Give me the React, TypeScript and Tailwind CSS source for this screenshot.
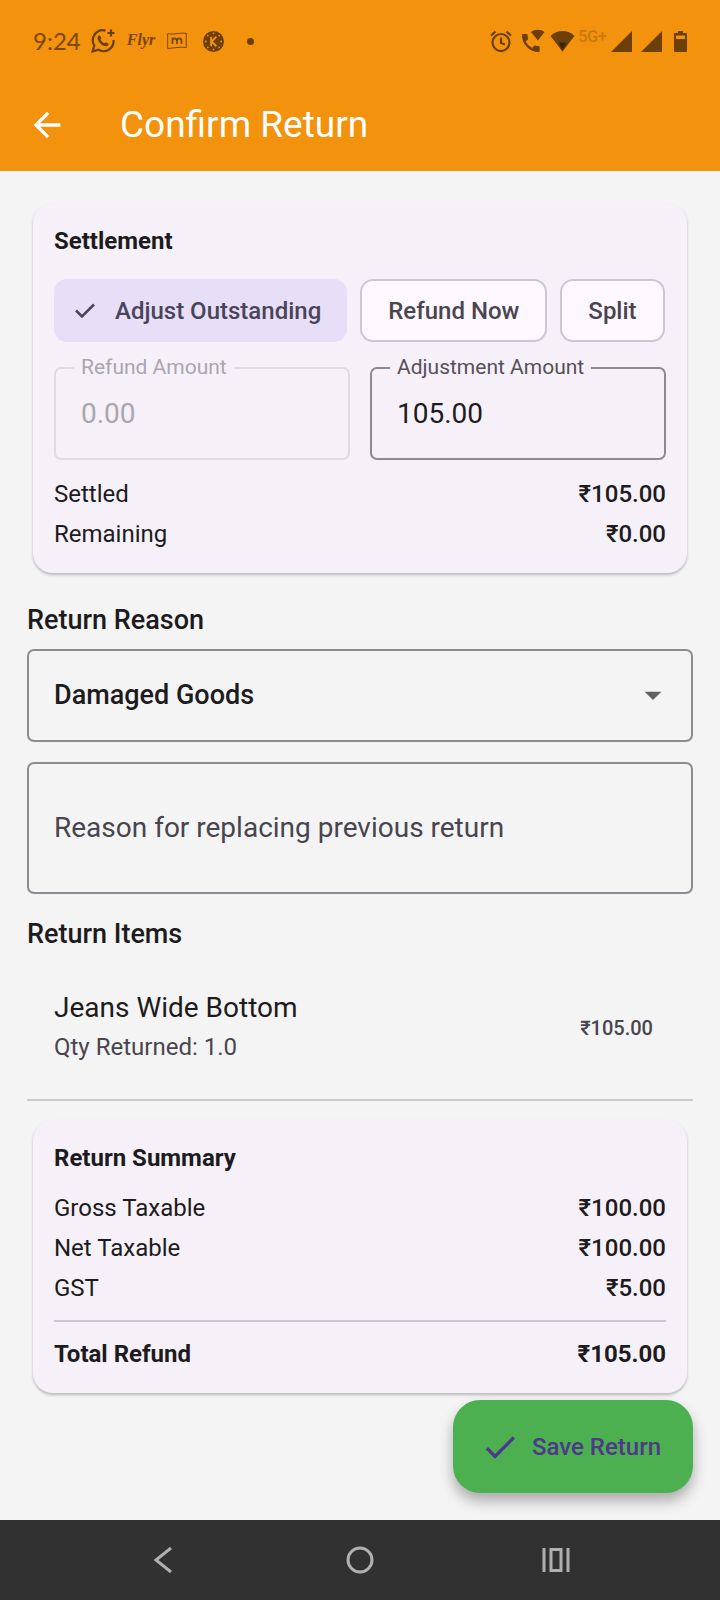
import { useState } from "react";
import type { ReactNode } from "react";

type Settlement = "adjust" | "refund" | "split";

const options: { id: Settlement; label: string }[] = [
  { id: "adjust", label: "Adjust Outstanding" },
  { id: "refund", label: "Refund Now" },
  { id: "split", label: "Split" },
];

const StatusBar = () => (
  <div className="flex justify-between px-[33px] pt-[27px] pb-[23px] text-[#6b3f05]">
    <div className="flex h-7 items-center">
      <span className="font-['Lato',sans-serif] text-2xl leading-7 text-[#7a4606]">9:24</span>
      <svg className="ml-[10px] h-6 w-6" viewBox="0 0 24 24" fill="none" stroke="currentColor" strokeWidth="2.200">
        <path d="M14.5 1.6A10 10 0 0 0 3.3 16.4L1.6 22.4l6-1.6A10 10 0 0 0 22.500 11" />
        <path d="M20 0.5v7M16.500 4h7" />
        <path
          fill="currentColor"
          stroke="none"
          d="M8 6.600c.7-.2 1.200 0 1.500.6l.7 1.800c.2.6-.1 1.100-.8 1.800.9 1.500 2.200 2.700 3.900 3.600.7-.8 1.200-1.200 1.900-.9l1.700.8c.6.3.8.8.5 1.400-.6 1.300-2 1.800-3.500 1.400-3.500-1-6.200-3.500-7.200-6.900-.4-1.500 0-2.900 1.300-3.600z"
        />
      </svg>
      <span className="ml-3 mb-[2px] font-['Liberation_Serif',serif] text-base font-bold italic leading-6 text-[#7a4606]">
        Flyr
      </span>
      <svg className="ml-3 h-5 w-5 text-[#7a4606]" viewBox="0 0 20 20" fill="none" stroke="currentColor">
        <path d="M.7 2.700q5 .8 9.300 0t9.300-.5v14.300q-5-.6-9.300 0t-9.300 1z" strokeWidth="1" />
        <path d="M5.500 13V6.500M5.500 9q0-1.500 2-1.500t2.500 1.500v4M10 9q.2-1.500 2.200-1.500t2.300 1.500v4" strokeWidth="1.800" />
      </svg>
      <svg className="ml-4 h-[21px] w-[21px]" viewBox="0 0 22 22">
        <circle cx="11" cy="11" r="11" fill="currentColor" />
        <path d="M8.500 6v10M14 6l-5 5 5 5" fill="none" stroke="#f3920d" strokeWidth="2" />
        <g fill="#f3920d">
          <circle cx="11" cy="2.600" r=".9" />
          <circle cx="5" cy="4.800" r=".9" />
          <circle cx="17" cy="4.800" r=".9" />
          <circle cx="3" cy="11" r="1" />
          <circle cx="19" cy="11" r="1" />
          <circle cx="5" cy="17.200" r=".9" />
          <circle cx="17" cy="17.200" r=".9" />
          <circle cx="11" cy="19.400" r=".9" />
        </g>
      </svg>
      <span className="ml-[23px] h-[7px] w-[7px] rounded-full bg-[#6b3f05]" />
    </div>

    <div className="flex h-7 items-center">
      <svg className="h-[22px] w-[22px]" viewBox="0 0 22 22" fill="none" stroke="currentColor" strokeWidth="2.200">
        <circle cx="11" cy="12.500" r="8.500" />
        <path d="M11 7.500v5.500l4 1.500M1 5.500l4.500-4M21 5.500l-4.500-4" />
      </svg>
      <svg className="ml-[9px] h-6 w-6" viewBox="0 0 24 24" fill="currentColor">
        <path d="M2 5h3.500c.5 0 1 .4 1 1 0 1.200.2 2.300.6 3.400.1.400 0 .8-.3 1L4.700 12.600c1.400 2.700 3.700 4.900 6.400 6.300l2.100-2.100c.3-.3.700-.4 1-.2 1.100.4 2.300.6 3.500.6.600 0 1 .4 1 1V22c0 .6-.4 1-1 1C8.600 23 1 15.500 1 6c0-.6.4-1 1-1z" />
        <path d="M16.800 11.500 10 3c4-3 9.500-3 13.500 0z" />
      </svg>
      <svg className="ml-[5px] h-[22px] w-[25px]" viewBox="0 0 25 22">
        <path d="M12.500 21.500.5 6Q5.500 1 12.500 1t12 5z" fill="currentColor" />
        <path d="M12.500 21.500 8.800 12.500h7.400z" fill="#3d2400" />
      </svg>
      <span className="ml-[3px] mb-2 text-base font-medium leading-4 text-[#c9780d]">5G+</span>
      <svg className="ml-1 h-[21px] w-[21px]" viewBox="0 0 21 21" fill="currentColor">
        <path d="M0 21 21 0v21z" />
      </svg>
      <svg className="ml-[9px] h-[21px] w-[21px]" viewBox="0 0 21 21" fill="currentColor">
        <path d="M0 21 21 0v21z" />
      </svg>
      <svg className="ml-3 h-[21px] w-[13px]" viewBox="0 0 13 21" fill="currentColor" fillRule="evenodd">
        <path d="M4 0h5v2h3q1 0 1 1v17q0 1-1 1H1q-1 0-1-1V3q0-1 1-1h3zM2 4.500V8h9V4.500z" />
      </svg>
    </div>
  </div>
);

const Card = ({ title, children }: { title: string; children: ReactNode }) => (
  <section className="mx-[6px] rounded-[20px] bg-[#f6f1f9] px-[21px] pt-6 pb-[19px] shadow-[0_2px_3px_rgba(0,0,0,0.24)]">
    <h2 className="text-2xl font-bold leading-7">{title}</h2>
    {children}
  </section>
);

const Row = ({ label, value, bold }: { label: string; value: string; bold?: boolean }) => (
  <div className="flex h-10 items-center justify-between text-2xl">
    <dt className={bold ? "font-bold" : ""}>{label}</dt>
    <dd className={bold ? "font-bold" : "font-medium"}>{value}</dd>
  </div>
);

type AmountFieldProps = {
  id: string;
  label: string;
  value: string;
  disabled?: boolean;
  onChange: (value: string) => void;
};

// Outlined text field, the label sits on the top border
const AmountField = ({ id, label, value, disabled, onChange }: AmountFieldProps) => (
  <div className="relative min-w-0 flex-1">
    <label
      htmlFor={id}
      className={`absolute -top-3 left-5 bg-[#f6f1f9] px-[7px] text-[21px] leading-6 whitespace-nowrap ${
        disabled ? "text-[#aaa6ad]" : "text-[#55505a]"
      }`}
    >
      {label}
    </label>
    <input
      id={id}
      type="text"
      inputMode="decimal"
      value={value}
      disabled={disabled}
      onChange={(e) => onChange(e.target.value)}
      className="h-[93px] w-full rounded-[7px] border-2 border-[#8e8a92] bg-transparent px-[25px] text-[28px] outline-none disabled:border-[#e0dbe3] disabled:text-[#aaa6ad]"
    />
  </div>
);

export default function App() {
  const [settlement, setSettlement] = useState<Settlement>("adjust");
  const [refund, setRefund] = useState("0.00");
  const [adjustment, setAdjustment] = useState("105.00");
  const [note, setNote] = useState("");

  return (
    <div className="flex min-h-screen flex-col bg-[#f4f4f4] font-['Roboto',sans-serif] text-[#1d1b20]">
      <header className="bg-[#f3920d]">
        <StatusBar />
        <div className="flex h-[93px] items-center gap-[53px] px-[27px] text-white">
          <button type="button" aria-label="Back">
            <svg className="h-10 w-10" viewBox="0 0 24 24" fill="currentColor">
              <path d="M20 11H7.830l5.590-5.590L12 4l-8 8 8 8 1.410-1.410L7.830 13H20v-2z" />
            </svg>
          </button>
          <h1 className="text-[37px] leading-[44px]">Confirm Return</h1>
        </div>
      </header>

      <main className="flex flex-1 flex-col px-[27px] pt-8 pb-[27px]">
        <Card title="Settlement">
          <div className="mt-6 flex flex-wrap gap-[13px]">
            {options.map(({ id, label }) => {
              const selected = settlement === id;
              return (
                <button
                  key={id}
                  type="button"
                  aria-pressed={selected}
                  onClick={() => setSettlement(id)}
                  className={`flex h-[63px] items-center rounded-[13px] border-2 text-2xl font-medium ${
                    selected
                      ? "border-[#e7def7] bg-[#e7def7] pr-6 pl-[19px] text-[#4a4458]"
                      : "border-[#cdc7d1] bg-[#fdf7ff] px-[26px] text-[#49454f]"
                  }`}
                >
                  {selected && (
                    <svg className="mr-5 h-5 w-5" viewBox="0 0 20 20" fill="none" stroke="currentColor" strokeWidth="2.500">
                      <path d="M1 9.500 7 15.500 19 3.500" />
                    </svg>
                  )}
                  {label}
                </button>
              );
            })}
          </div>

          <div className="mt-[25px] flex gap-5">
            <AmountField
              id="refund-amount"
              label="Refund Amount"
              value={refund}
              disabled={settlement === "adjust"}
              onChange={setRefund}
            />
            <AmountField
              id="adjustment-amount"
              label="Adjustment Amount"
              value={adjustment}
              disabled={settlement === "refund"}
              onChange={setAdjustment}
            />
          </div>

          <dl className="mt-[14px]">
            <Row label="Settled" value="₹105.00" />
            <Row label="Remaining" value="₹0.00" />
          </dl>
        </Card>

        <label htmlFor="reason" className="mt-[31px] text-[27px] font-medium leading-8">
          Return Reason
        </label>
        <div className="relative mt-[13px]">
          <select
            id="reason"
            className="h-[93px] w-full appearance-none rounded-[7px] border-2 border-[#8e8a92] bg-transparent px-[25px] text-[27px] font-medium outline-none"
          >
            <option>Damaged Goods</option>
            <option>Wrong Item</option>
            <option>Other</option>
          </select>
          <svg
            className="pointer-events-none absolute top-[26px] right-5 h-10 w-10 text-[#616161]"
            viewBox="0 0 24 24"
            fill="currentColor"
          >
            <path d="M7 10l5 5 5-5z" />
          </svg>
        </div>

        <textarea
          rows={1}
          aria-label="Reason for replacing previous return"
          placeholder="Reason for replacing previous return"
          value={note}
          onChange={(e) => setNote(e.target.value)}
          className="mt-5 block w-full resize-none rounded-[7px] border-2 border-[#8e8a92] bg-transparent px-[25px] py-12 text-[28px] leading-8 outline-none placeholder:text-[#49454f]"
        />

        <h2 className="mt-6 text-[27px] font-medium leading-8">Return Items</h2>
        <ul>
          <li className="flex items-center justify-between border-b-2 border-[#cdc9d0] pt-10 pr-10 pb-[34px] pl-[27px]">
            <div>
              <p className="text-[28px] leading-9">Jeans Wide Bottom</p>
              <p className="mt-[3px] text-2xl leading-9 text-[#49454f]">Qty Returned: 1.0</p>
            </div>
            <span className="text-xl font-medium text-[#49454f]">₹105.00</span>
          </li>
        </ul>

        <div className="mt-[19px]">
          <Card title="Return Summary">
            <dl className="mt-4">
              <Row label="Gross Taxable" value="₹100.00" />
              <Row label="Net Taxable" value="₹100.00" />
              <Row label="GST" value="₹5.00" />
            </dl>
            <dl className="mt-3 border-t-2 border-[#cdc7d1] pt-3">
              <Row label="Total Refund" value="₹105.00" bold />
            </dl>
          </Card>
        </div>

        <button
          type="button"
          className="mt-[7px] flex h-[93px] items-center gap-3 self-end rounded-[27px] bg-[#4caf50] pr-8 pl-[27px] text-2xl font-medium text-[#4f378b] shadow-[0_8px_14px_rgba(0,0,0,0.3)]"
        >
          <svg className="h-10 w-10" viewBox="0 0 24 24" fill="currentColor">
            <path d="M9 16.170L4.830 12l-1.420 1.410L9 19 21 7l-1.410-1.410z" />
          </svg>
          Save Return
        </button>
      </main>

      <nav className="flex h-20 items-center justify-center gap-[156px] bg-[#313131] text-[#b0b0b0]">
        <button type="button" aria-label="System back">
          <svg className="h-10 w-10" viewBox="0 0 40 40" fill="none" stroke="currentColor" strokeWidth="3">
            <path d="M27 8 12 20l15 12" />
          </svg>
        </button>
        <button type="button" aria-label="Home">
          <svg className="h-10 w-10" viewBox="0 0 40 40" fill="none" stroke="currentColor" strokeWidth="3">
            <circle cx="20" cy="20" r="12" />
          </svg>
        </button>
        <button type="button" aria-label="Recent apps">
          <svg className="h-10 w-10" viewBox="0 0 40 40" fill="none" stroke="currentColor" strokeWidth="3">
            <path d="M8 8v24M32 8v24M15 9.500h10v21H15z" />
          </svg>
        </button>
      </nav>
    </div>
  );
}
